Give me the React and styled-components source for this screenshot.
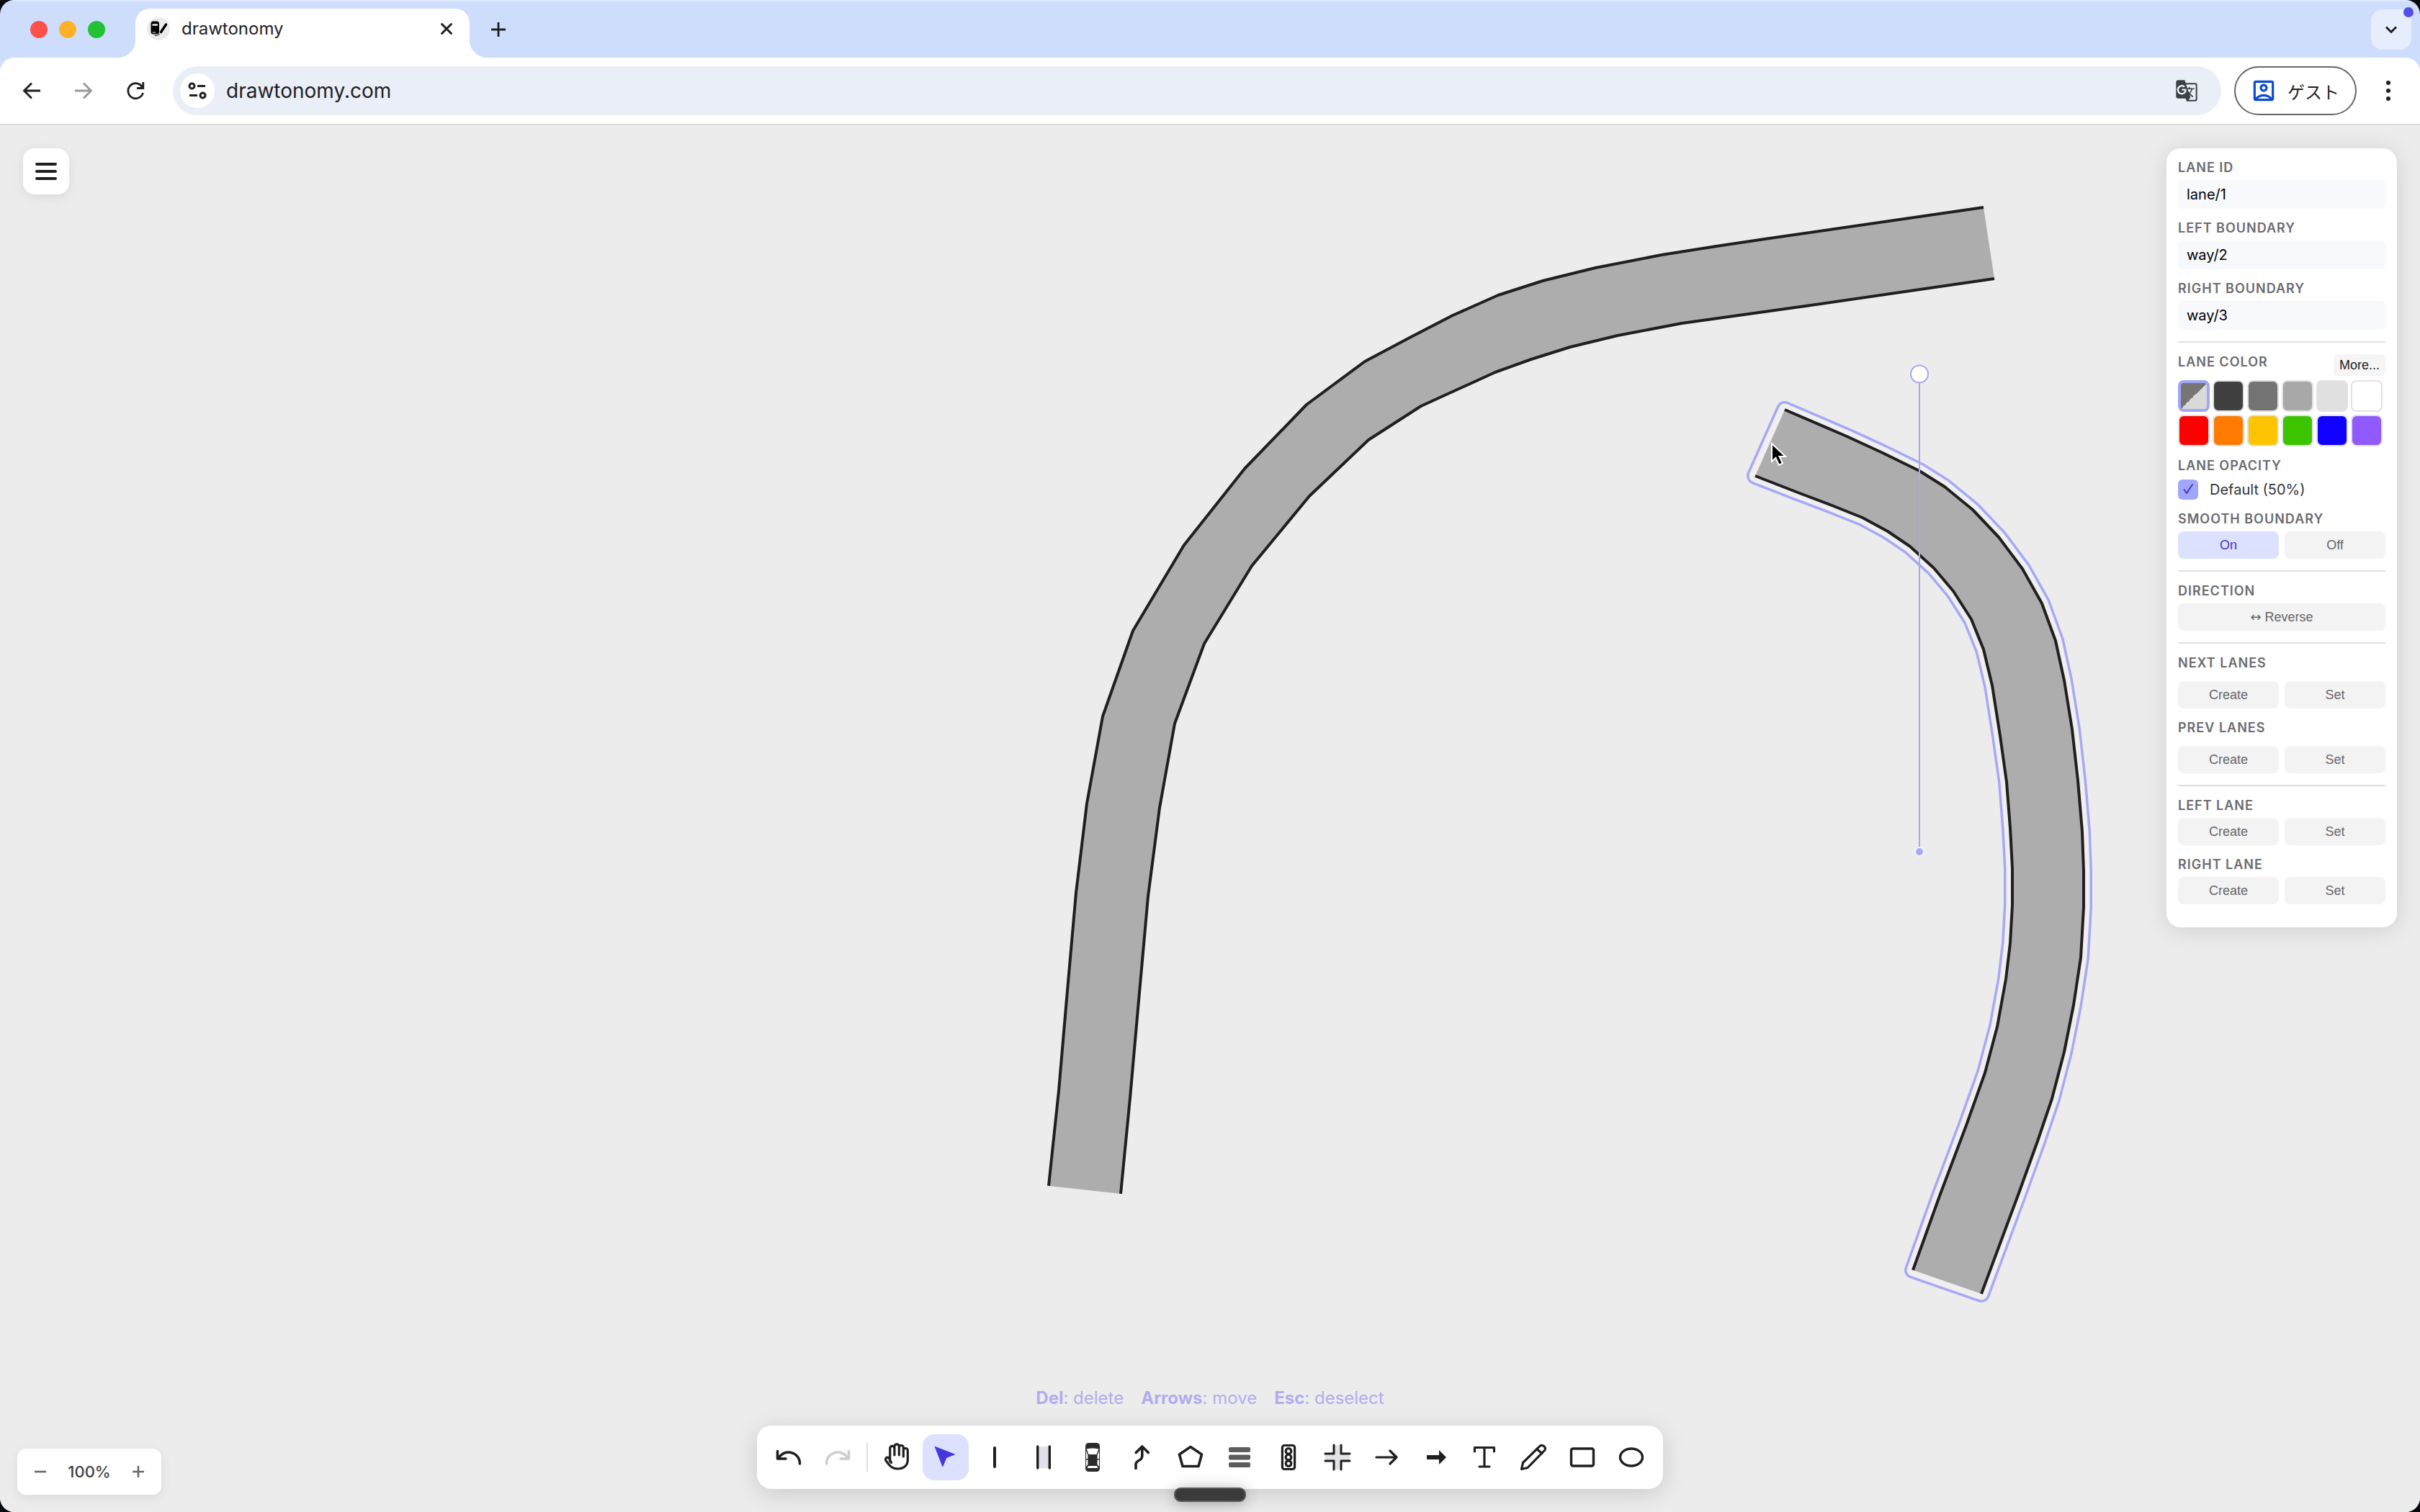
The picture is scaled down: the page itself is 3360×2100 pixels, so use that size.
import React from 'react';
import styled, { createGlobalStyle, css } from 'styled-components';
import { MdGTranslate, MdOutlineAccountBox } from 'react-icons/md';

const GlobalStyle = createGlobalStyle`
  * {
    box-sizing: border-box;
  }

  body {
    margin: 0;
    background: #05080c;
    font-family: Inter, "Noto Sans CJK JP", sans-serif;
    color: #1f1f1f;
  }

  button, input {
    margin: 0;
    padding: 0;
    border: 0;
    font: inherit;
    color: inherit;
    background: none;
  }

  button {
    cursor: pointer;
  }
`;

const Window = styled.div`
  display: flex;
  flex-direction: column;
  min-height: 100vh;
  border-radius: 20px;
  overflow: hidden;
  background: #cdddfb;
`;

/* ---------- browser chrome ---------- */

const TabStrip = styled.div`
  display: flex;
  align-items: center;
  height: 80px;
  padding: 0 12px 0 42px;
  border-top: 2px solid #dfe9fd;
`;

const Lights = styled.div`
  display: flex;
  gap: 16px;
  width: 146px;
`;

const Light = styled.span`
  width: 24px;
  height: 24px;
  border-radius: 50%;
  background: ${p => p.$color};
`;

const Tab = styled.div`
  position: relative;
  display: flex;
  align-items: center;
  align-self: flex-end;
  width: 464px;
  height: 68px;
  padding: 0 22px 12px 16px;
  border-radius: 20px 20px 0 0;
  background: #fff;

  &:before, &:after {
    content: '';
    position: absolute;
    bottom: 0;
    width: 24px;
    height: 24px;
  }
  &:before {
    left: -24px;
    background: radial-gradient(circle at 0 0, transparent 24px, #fff 24px);
  }
  &:after {
    right: -24px;
    background: radial-gradient(circle at 100% 0, transparent 24px, #fff 24px);
  }
`;

const TabTitle = styled.span`
  flex: 1;
  margin-left: 16px;
  font-size: 24px;
  line-height: 32px;
`;

const ChromeButton = styled.button`
  display: flex;
  align-items: center;
  justify-content: center;
  width: ${p => p.$size || 56}px;
  height: ${p => p.$size || 56}px;
  border-radius: 16px;

  &:disabled {
    opacity: 0.45;
  }
`;

const NewTab = styled(ChromeButton)`
  margin-left: 12px;
`;

const TabSearch = styled(ChromeButton)`
  position: relative;
  margin-left: auto;
  background: #e6eefd;

  &:after {
    content: '';
    position: absolute;
    top: -3px;
    right: -3px;
    width: 14px;
    height: 14px;
    border-radius: 50%;
    background: #5450e4;
  }
`;

const NavBar = styled.div`
  display: flex;
  align-items: center;
  height: 94px;
  padding: 0 16px;
  border-bottom: 2px solid #dadada;
  border-radius: 20px 20px 0 0;
  background: #fff;
`;

const NavButtons = styled.div`
  display: flex;
  gap: 16px;
  margin-right: 24px;
`;

const AddressBar = styled.div`
  display: flex;
  flex: 1;
  align-items: center;
  height: 68px;
  padding: 0 32px 0 10px;
  border-radius: 34px;
  background: #e9eef7;
`;

const SiteInfo = styled.button`
  display: flex;
  align-items: center;
  justify-content: center;
  width: 48px;
  height: 48px;
  border-radius: 50%;
  background: #fff;
`;

const Url = styled.input`
  flex: 1;
  margin-left: 16px;
  font-size: 28px;
  line-height: 36px;
  outline: none;
`;

const GuestButton = styled.button`
  display: flex;
  align-items: center;
  gap: 14px;
  height: 68px;
  margin: 0 16px 0 18px;
  padding: 0 22px 0 20px;
  border: 2px solid #666;
  border-radius: 34px;
  font-family: "Noto Sans CJK JP", sans-serif;
  font-size: 24px;

  svg {
    color: #0b4bd0;
  }
`;

/* ---------- editor ---------- */

const Workspace = styled.main`
  position: relative;
  display: flex;
  flex: 1;
  flex-direction: column;
  justify-content: space-between;
  background: #ececec;
`;

const Canvas = styled.svg`
  position: absolute;
  inset: 0;
  width: 100%;
  height: 100%;
`;

const TopRow = styled.div`
  position: relative;
  display: flex;
  align-items: flex-start;
  justify-content: space-between;
  padding: 32px;
  pointer-events: none;

  > * {
    pointer-events: auto;
  }
`;

const BottomRow = styled.div`
  position: relative;
  display: grid;
  grid-template-columns: 1fr auto 1fr;
  align-items: end;
  padding: 0 24px 24px;
`;

const surface = css`
  background: #fff;
  box-shadow: 0 4px 16px rgba(0, 0, 0, 0.08);
`;

const MenuButton = styled.button`
  ${surface}
  display: flex;
  align-items: center;
  justify-content: center;
  width: 64px;
  height: 64px;
  border-radius: 16px;
`;

const Panel = styled.aside`
  width: 320px;
  padding: 16px 16px 32px;
  border-radius: 20px;
  background: #fff;
  box-shadow: 0 4px 32px rgba(0, 0, 0, 0.12);
`;

const Section = styled.section`
  display: flex;
  flex-direction: column;
  gap: 16px;

  & + & {
    margin-top: 16px;
    padding-top: 16px;
    border-top: 2px solid #e0e0e0;
  }
`;

const Field = styled.div`
  display: flex;
  flex-direction: column;
  gap: ${p => (p.$loose ? 14 : 6)}px;
`;

const Label = styled.label`
  font-size: 18px;
  font-weight: 600;
  line-height: 22px;
  letter-spacing: 1px;
  text-transform: uppercase;
  color: #6b6b70;
`;

const TextInput = styled.input`
  width: 100%;
  height: 40px;
  padding: 0 12px;
  border-radius: 6px;
  background: #f8f9fc;
  font-size: 20px;
  color: #000;
`;

const LabelRow = styled.div`
  display: flex;
  align-items: flex-start;
  justify-content: space-between;
`;

const MoreButton = styled.button`
  height: 30px;
  padding: 0 8px;
  border-radius: 6px;
  background: #f5f5f5;
  font-family: "Liberation Sans", sans-serif;
  font-size: 18px;
`;

const Swatches = styled.div`
  display: grid;
  grid-template-columns: repeat(6, 44px);
  gap: 4px;
`;

const Swatch = styled.button`
  height: 44px;
  border: ${p => (p.$active ? '4px solid #a0a6f6' : '2px solid #e2e2e4')};
  border-radius: 8px;
  background: ${p => p.$color};
`;

const CheckRow = styled.label`
  display: flex;
  align-items: center;
  gap: 16px;
  margin-top: 2px;
  font-size: 20px;
  line-height: 28px;
  color: #33363a;
`;

const CheckBox = styled.span`
  display: grid;
  width: 28px;
  height: 28px;

  > * {
    grid-area: 1 / 1;
  }
  input {
    appearance: none;
    border-radius: 6px;
    background: #a0a6fa;
  }
  svg {
    pointer-events: none;
  }
`;

const ButtonRow = styled.div`
  display: flex;
  gap: 8px;
`;

const PanelButton = styled.button`
  flex: 1;
  height: 38px;
  border-radius: 8px;
  background: ${p => (p.$active ? '#dbe1fe' : '#f3f3f4')};
  font-family: "Liberation Sans", sans-serif;
  font-size: 18px;
  color: ${p => (p.$active ? '#4338ca' : '#66666a')};
`;

const Glyph = styled.span`
  font-family: "DejaVu Sans", sans-serif;
`;

const ZoomControl = styled.div`
  ${surface}
  display: flex;
  align-items: center;
  justify-content: space-between;
  width: 200px;
  height: 64px;
  padding: 0 8px;
  border-radius: 12px;
  font-size: 22px;
  font-weight: 500;
  color: #3d4045;
`;

const ZoomButton = styled.button`
  display: flex;
  align-items: center;
  justify-content: center;
  width: 48px;
  height: 48px;
  color: #66696d;
`;

const Dock = styled.div`
  position: relative;
  display: flex;
  flex-direction: column;
  align-items: center;
  gap: 22px;
  margin-bottom: 8px;
`;

const Hints = styled.div`
  display: flex;
  gap: 24px;
  font-size: 24px;
  line-height: 32px;
  color: #b0adee;
`;

const Toolbar = styled.div`
  display: flex;
  align-items: center;
  gap: 4px;
  height: 88px;
  padding: 0 12px;
  border-radius: 20px;
  background: #fff;
  box-shadow: 0 6px 32px rgba(0, 0, 0, 0.15);
`;

const Tool = styled.button`
  display: flex;
  align-items: center;
  justify-content: center;
  width: 64px;
  height: 64px;
  border-radius: 16px;
  background: ${p => (p.$active ? '#dbe1fe' : 'transparent')};

  &:disabled {
    opacity: 0.22;
  }
`;

const Separator = styled.span`
  width: 2px;
  height: 40px;
  margin: 0 4px;
  background: #dedee2;
`;

const Handle = styled.span`
  position: absolute;
  bottom: -18px;
  left: 50%;
  width: 100px;
  height: 20px;
  margin-left: -50px;
  border: 2px solid #5a5a5a;
  border-radius: 9px;
  background: #3b3b3b;
  box-shadow: 0 2px 20px rgba(0, 0, 0, 0.3);
`;

/* All icons are drawn around their own centre. */
const Icon = ({ size = 48, width = 4, children }) => (
  <svg
    width={size}
    height={size}
    viewBox={`${-size / 2} ${-size / 2} ${size} ${size}`}
    fill="none"
    stroke="currentColor"
    strokeWidth={width}
    strokeLinecap="round"
    strokeLinejoin="round"
    aria-hidden="true"
  >
    {children}
  </svg>
);

const tools = [
  {
    name: 'Hand',
    icon: (
      <path
        strokeWidth="3.2"
        d="M-9.3 6V-12.5a3.1 3.1 0 0 1 6.2 0V-3M-3.1-12.5V-15a3.2 3.2 0 0 1 6.4 0V-3M3.3-13.5a3 3 0 0 1 6 0V-1M9.3-9.5a3 3 0 0 1 6 0V4C15.3 11.5 9.5 16 1.5 16C-4.5 16-8 13.5-10.5 10.5L-14.7 5C-17 1.5-13.5-1-11 1C-9.5 2.500-9 5-7.5 7.5"
      />
    )
  },
  {
    name: 'Select',
    icon: <path d="M-14.5-14.5L12.500-4 1 0.5-4 12.5z" fill="#4338e0" stroke="#4338e0" strokeWidth="1" />
  },
  { name: 'Line', icon: <path d="M0-13V13" /> },
  {
    name: 'Lane',
    icon: (
      <>
        <path d="M-8-15H8V15H-8z" fill="#e2e1e9" stroke="none" />
        <path d="M-8.3-15V15M8.3-15V15" strokeWidth="3.4" />
      </>
    )
  },
  {
    name: 'Vehicle',
    icon: (
      <>
        <rect x="-10" y="-20" width="20" height="40" rx="4.5" fill="#2b2b2b" stroke="none" />
        <path d="M-8.3-11.5Q0-13.5 8.3-11.500L5.5-4H-5.500z" fill="#fff" stroke="none" />
        <path d="M-9-9L-6.6-3V2H-9zM9-9L6.6-3V2H9zM-9 3.5H-6.6V10L-9 13zM9 3.500H6.6V10L9 13z" fill="#fff" stroke="none" />
        <path d="M-6 12H6L7.500 15H-7.5z" fill="#fff" stroke="none" />
      </>
    )
  },
  { name: 'Path', icon: <path d="M-8 15.500V10C-8 3 0.8 6 0.8-2V-14M-7.700-6.5L0.8-15 9.300-6.5" strokeWidth="3.6" /> },
  { name: 'Polygon', icon: <path d="M0-14.5L15.5-4 11 12.5H-11L-15.5-4z" strokeWidth="3.6" /> },
  {
    name: 'Crosswalk',
    icon: (
      <g fill="#5d5d5d" stroke="none">
        <rect x="-15" y="-14" width="30" height="7" rx="2" />
        <rect x="-15" y="-3.5" width="30" height="7" rx="2" />
        <rect x="-15" y="7" width="30" height="7" rx="2" />
      </g>
    )
  },
  {
    name: 'Traffic light',
    icon: (
      <g strokeWidth="3.2">
        <rect x="-8.6" y="-16.5" width="17.2" height="33" rx="3" />
        <circle cy="-8.6" r="3.8" />
        <circle r="3.8" />
        <circle cy="8.6" r="3.8" />
      </g>
    )
  },
  {
    name: 'Intersection',
    icon: (
      <>
        <path d="M-5-17H5V17H-5zM-17-5H17V5H-17z" fill="#e2e2e7" stroke="none" />
        <path d="M-5-17V-5H-17M5-17V-5H17M-5 17V5H-17M5 17V5H17" strokeWidth="3" />
      </>
    )
  },
  { name: 'Arrow', icon: <path d="M-14 0H14M5-9L14 0 5 9" strokeWidth="3.2" /> },
  { name: 'Block arrow', icon: <path d="M-12-3H5V-10L15 0 5 10V3H-12z" fill="currentColor" stroke="none" /> },
  { name: 'Text', icon: <path d="M-13.5-8V-13.5H13.5V-8M0-13V13M-7 13H7" strokeWidth="3.2" /> },
  {
    name: 'Pencil',
    icon: <path d="M-16.5 16.5L-14.5 7.5 8.5-15.2C12.5-19 19-13.5 15.5-9.5L-8 14.5zM4.5-11.5L12-5.5" strokeWidth="3.2" />
  },
  { name: 'Rectangle', icon: <rect x="-15.5" y="-12" width="31" height="24" rx="2.5" strokeWidth="3.4" /> },
  { name: 'Ellipse', icon: <ellipse rx="15.5" ry="12" strokeWidth="3.4" /> }
];

const swatches = [
  'linear-gradient(135deg, #777573 50%, #d9d9d9 50%)', '#404040', '#737373', '#a8a8a8', '#e0e0e0', '#ffffff',
  '#ff0000', '#ff7b00', '#ffc400', '#3cc400', '#1000ff', '#8f5aff'
];

const laneA = {
  left: '2754,288 2450,332 2383,342 2307,354 2215,372 2142,390 2080,410 2017,438 1959,468 1895,502 1814,562 1728,651 1644,757 1573,876 1531,995 1509,1116 1494,1240 1481,1387 1470,1515 1456,1647',
  right: '1556,1658 1569,1525 1580,1401 1594,1245 1610,1122 1631,1005 1672,894 1738,786 1818,689 1900,611 1973,564 2076,517 2126,499 2180,482 2246,466 2335,449 2507,425 2769,387'
};

const laneB = {
  left: '2478,569 2564,606 2614,629 2665,654 2700,676 2739,708 2775,746 2808,790 2835,838 2854,890 2866,945 2877,1013 2885,1084 2891,1155 2893,1210 2893,1260 2889,1330 2879,1396 2866,1461 2849,1526 2829,1585 2803,1657 2777,1727 2751,1797',
  right: '2656,1764 2693,1661 2730,1563 2756,1490 2773,1426 2785,1360 2791,1310 2794,1257 2794,1206 2791,1150 2786,1086 2777,1022 2766,952 2754,902 2737,860 2712,821 2685,789 2652,759 2621,738 2586,719 2546,703 2496,684 2437,661'
};

const Lane = ({ left, right, selected }) => (
  <g strokeLinejoin="round">
    {selected && (
      <>
        <polygon points={`${left} ${right}`} fill="none" stroke="#a6a8f6" strokeWidth="24" />
        <polygon points={`${left} ${right}`} fill="none" stroke="#efeff0" strokeWidth="17" />
      </>
    )}
    <polygon points={`${left} ${right}`} fill="#adadad" />
    <polyline points={left} fill="none" stroke="#1f1f1f" strokeWidth="4" />
    <polyline points={right} fill="none" stroke="#1f1f1f" strokeWidth="4" />
  </g>
);

const TextField = ({ id, label, value }) => (
  <Field>
    <Label htmlFor={id}>{label}</Label>
    <TextInput id={id} defaultValue={value} />
  </Field>
);

const LinkField = ({ label, loose }) => (
  <Field $loose={loose}>
    <Label as="span">{label}</Label>
    <ButtonRow>
      <PanelButton>Create</PanelButton>
      <PanelButton>Set</PanelButton>
    </ButtonRow>
  </Field>
);

const BrowserBar = () => (
  <>
    <TabStrip>
      <Lights>
        <Light $color="#ff5049" />
        <Light $color="#fdb12b" />
        <Light $color="#22c234" />
      </Lights>
      <Tab>
        <Icon size={32}>
          <circle r="16" fill="#ebebeb" stroke="none" />
          <rect x="-10.5" y="-10.500" width="11.5" height="18" rx="3.5" fill="#000" stroke="none" />
          <path d="M-7.500-5.5H-2" stroke="#ebebeb" strokeWidth="2.5" />
          <path d="M-8 5H-4" stroke="#ebebeb" strokeWidth="1" />
          <path d="M3.500 4.500L10.5-6" stroke="#000" strokeWidth="3.4" />
          <path d="M-5 9.5Q-1 10 1.500 7.500" stroke="#000" strokeWidth="1" />
        </Icon>
        <TabTitle>drawtonomy</TabTitle>
        <ChromeButton $size={20} aria-label="Close tab">
          <Icon size={20} width={3}><path d="M-6.500-6.500L6.5 6.5M6.5-6.500L-6.500 6.5" /></Icon>
        </ChromeButton>
      </Tab>
      <NewTab aria-label="New tab">
        <Icon size={28} width={2.8}><path d="M-10 0H10M0-10V10" strokeLinecap="butt" /></Icon>
      </NewTab>
      <TabSearch aria-label="Search tabs">
        <Icon size={28} width={3}><path d="M-7-3.5L0 3.5 7-3.5" strokeLinecap="butt" strokeLinejoin="miter" /></Icon>
      </TabSearch>
    </TabStrip>
    <NavBar>
      <NavButtons>
        <ChromeButton aria-label="Back">
          <Icon size={32} width={2.8}><path d="M12 0H-10M0-10.500L-10.5 0 0 10.5" strokeLinecap="butt" strokeLinejoin="miter" /></Icon>
        </ChromeButton>
        <ChromeButton aria-label="Forward" disabled>
          <Icon size={32} width={2.8}><path d="M-12 0H10M0-10.500L10.5 0 0 10.5" strokeLinecap="butt" strokeLinejoin="miter" /></Icon>
        </ChromeButton>
        <ChromeButton aria-label="Reload">
          <Icon size={32} width={2.8}>
            <path d="M10.500 3A10.500 10.500 0 1 1 8-7L10.500-4M10.800-12V-3.500H2" strokeLinecap="butt" strokeLinejoin="miter" />
          </Icon>
        </ChromeButton>
      </NavButtons>
      <AddressBar>
        <SiteInfo aria-label="Site information">
          <Icon size={28} width={3}>
            <circle cx="-7.5" cy="-6.5" r="3.5" />
            <path d="M0-6.500H11M-11 6.500H0" strokeLinecap="butt" />
            <circle cx="7.5" cy="6.5" r="3.5" />
          </Icon>
        </SiteInfo>
        <Url aria-label="Address" defaultValue="drawtonomy.com" />
        <ChromeButton $size={32} aria-label="Translate">
          <MdGTranslate size={36} color="#3c4043" />
        </ChromeButton>
      </AddressBar>
      <GuestButton>
        <MdOutlineAccountBox size={38} />
        ゲスト
      </GuestButton>
      <ChromeButton aria-label="Browser menu">
        <Icon size={32}>
          <g fill="currentColor" stroke="none">
            <circle cy="-11" r="3" />
            <circle r="3" />
            <circle cy="11" r="3" />
          </g>
        </Icon>
      </ChromeButton>
    </NavBar>
  </>
);

const LanePanel = () => (
  <Panel>
    <Section>
      <TextField id="lane-id" label="Lane ID" value="lane/1" />
      <TextField id="left-boundary" label="Left Boundary" value="way/2" />
      <TextField id="right-boundary" label="Right Boundary" value="way/3" />
    </Section>
    <Section>
      <Field>
        <LabelRow>
          <Label as="span">Lane Color</Label>
          <MoreButton>More...</MoreButton>
        </LabelRow>
        <Swatches>
          {swatches.map((color, i) => (
            <Swatch key={color} $color={color} $active={i === 0} aria-label={`Color ${i + 1}`} />
          ))}
        </Swatches>
      </Field>
      <Field>
        <Label as="span">Lane Opacity</Label>
        <CheckRow>
          <CheckBox>
            <input type="checkbox" defaultChecked />
            <Icon size={28} width={2}><path d="M-5.5 0L-2 5 6-7" stroke="#4338ca" /></Icon>
          </CheckBox>
          Default (50%)
        </CheckRow>
      </Field>
      <Field>
        <Label as="span">Smooth Boundary</Label>
        <ButtonRow>
          <PanelButton $active>On</PanelButton>
          <PanelButton>Off</PanelButton>
        </ButtonRow>
      </Field>
    </Section>
    <Section>
      <Field>
        <Label as="span">Direction</Label>
        <ButtonRow>
          <PanelButton><Glyph>↔</Glyph> Reverse</PanelButton>
        </ButtonRow>
      </Field>
    </Section>
    <Section>
      <LinkField label="Next Lanes" loose />
      <LinkField label="Prev Lanes" loose />
    </Section>
    <Section>
      <LinkField label="Left Lane" />
      <LinkField label="Right Lane" />
    </Section>
  </Panel>
);

const App = () => (
  <>
    <GlobalStyle />
    <Window>
      <BrowserBar />
      <Workspace>
        <Canvas>
          <g transform="translate(0 -174)">
            <Lane {...laneA} />
            <Lane {...laneB} selected />
            <g stroke="#a6a8f6">
              <path d="M2665 520V1183" strokeWidth="2" />
              <circle cx="2665" cy="519.5" r="12" fill="#fff" strokeWidth="2" />
              <circle cx="2665" cy="1183" r="6" fill="#a6a8f6" stroke="#f4f4f6" strokeWidth="2" />
            </g>
            <path
              d="M2460 616V641L2465.5 636 2470 646 2475 643.5 2470.5 634H2479z"
              fill="#000"
              stroke="#fff"
              strokeWidth="2"
            />
          </g>
        </Canvas>
        <TopRow>
          <MenuButton aria-label="Menu">
            <Icon size={40}><path d="M-13-10H13M-13 0H13M-13 10H13" /></Icon>
          </MenuButton>
          <LanePanel />
        </TopRow>
        <BottomRow>
          <ZoomControl>
            <ZoomButton aria-label="Zoom out">
              <Icon size={24} width={2.6}><path d="M-8 0H8" strokeLinecap="butt" /></Icon>
            </ZoomButton>
            100%
            <ZoomButton aria-label="Zoom in">
              <Icon size={24} width={2.6}><path d="M-8 0H8M0-8V8" strokeLinecap="butt" /></Icon>
            </ZoomButton>
          </ZoomControl>
          <Dock>
            <Hints>
              <span><b>Del</b>: delete</span>
              <span><b>Arrows</b>: move</span>
              <span><b>Esc</b>: deselect</span>
            </Hints>
            <Toolbar>
              <Tool aria-label="Undo">
                <Icon width={3.6}><path d="M-15.5-8.5V2H-4M-15 1.5C-10-4.5-5-7-1-7 8-7 15.5-1 15.5 9" /></Icon>
              </Tool>
              <Tool aria-label="Redo" disabled>
                <Icon width={3.6}><path d="M15.5-8.5V2H4M15 1.5C10-4.5 5-7 1-7-8-7-15.5-1-15.5 9" /></Icon>
              </Tool>
              <Separator />
              {tools.map(({ name, icon }) => (
                <Tool key={name} aria-label={name} $active={name === 'Select'}>
                  <Icon>{icon}</Icon>
                </Tool>
              ))}
            </Toolbar>
            <Handle />
          </Dock>
        </BottomRow>
      </Workspace>
    </Window>
  </>
);

export default App;
